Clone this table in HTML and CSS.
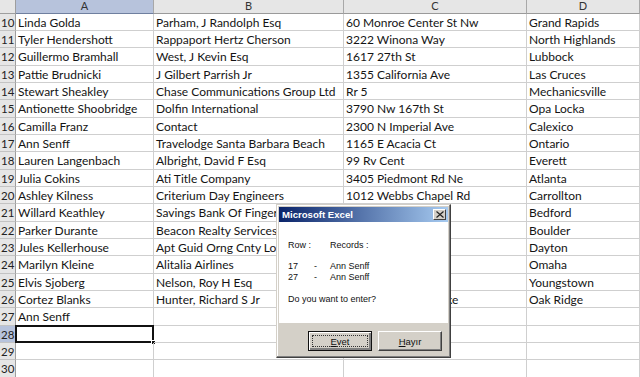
FILE: index.html
```html
<!DOCTYPE html>
<html>
<head>
<meta charset="utf-8">
<link rel="stylesheet" href="styles.css">
</head>
<body>
<div class="sheet">
  <div class="corner"></div>
  <div class="colhead sel">A</div>
  <div class="colhead">B</div>
  <div class="colhead">C</div>
  <div class="colhead">D</div>

  <div class="rowhead">10</div><div class="cell">Linda Golda</div><div class="cell">Parham, J Randolph Esq</div><div class="cell">60 Monroe Center St Nw</div><div class="cell">Grand Rapids</div>
  <div class="rowhead">11</div><div class="cell">Tyler Hendershott</div><div class="cell">Rappaport Hertz Cherson</div><div class="cell">3222 Winona Way</div><div class="cell">North Highlands</div>
  <div class="rowhead">12</div><div class="cell">Guillermo Bramhall</div><div class="cell">West, J Kevin Esq</div><div class="cell">1617 27th St</div><div class="cell">Lubbock</div>
  <div class="rowhead">13</div><div class="cell">Pattie Brudnicki</div><div class="cell">J Gilbert Parrish Jr</div><div class="cell">1355 California Ave</div><div class="cell">Las Cruces</div>
  <div class="rowhead">14</div><div class="cell">Stewart Sheakley</div><div class="cell">Chase Communications Group Ltd</div><div class="cell">Rr 5</div><div class="cell">Mechanicsville</div>
  <div class="rowhead">15</div><div class="cell">Antionette Shoobridge</div><div class="cell">Dolfin International</div><div class="cell">3790 Nw 167th St</div><div class="cell">Opa Locka</div>
  <div class="rowhead">16</div><div class="cell">Camilla Franz</div><div class="cell">Contact</div><div class="cell">2300 N Imperial Ave</div><div class="cell">Calexico</div>
  <div class="rowhead">17</div><div class="cell">Ann Senff</div><div class="cell">Travelodge Santa Barbara Beach</div><div class="cell">1165 E Acacia Ct</div><div class="cell">Ontario</div>
  <div class="rowhead">18</div><div class="cell">Lauren Langenbach</div><div class="cell">Albright, David F Esq</div><div class="cell">99 Rv Cent</div><div class="cell">Everett</div>
  <div class="rowhead">19</div><div class="cell">Julia Cokins</div><div class="cell">Ati Title Company</div><div class="cell">3405 Piedmont Rd Ne</div><div class="cell">Atlanta</div>
  <div class="rowhead">20</div><div class="cell">Ashley Kilness</div><div class="cell">Criterium Day Engineers</div><div class="cell">1012 Webbs Chapel Rd</div><div class="cell">Carrollton</div>
  <div class="rowhead">21</div><div class="cell">Willard Keathley</div><div class="cell">Savings Bank Of Finger Lakes</div><div class="cell">41 Main St</div><div class="cell">Bedford</div>
  <div class="rowhead">22</div><div class="cell">Parker Durante</div><div class="cell">Beacon Realty Services</div><div class="cell">2575 Pearl St Ste</div><div class="cell">Boulder</div>
  <div class="rowhead">23</div><div class="cell">Jules Kellerhouse</div><div class="cell">Apt Guid Orng Cnty Lodging</div><div class="cell">6 Commerce Place</div><div class="cell">Dayton</div>
  <div class="rowhead">24</div><div class="cell">Marilyn Kleine</div><div class="cell">Alitalia Airlines</div><div class="cell">4012 Farnam St</div><div class="cell">Omaha</div>
  <div class="rowhead">25</div><div class="cell">Elvis Sjoberg</div><div class="cell">Nelson, Roy H Esq</div><div class="cell">34 W Federal St</div><div class="cell">Youngstown</div>
  <div class="rowhead">26</div><div class="cell">Cortez Blanks</div><div class="cell">Hunter, Richard S Jr</div><div class="cell">1020 Oak Ridge Tpke</div><div class="cell">Oak Ridge</div>
  <div class="rowhead">27</div><div class="cell">Ann Senff</div><div class="cell"></div><div class="cell"></div><div class="cell"></div>
  <div class="rowhead sel">28</div><div class="cell active"><span class="handle"></span></div><div class="cell"></div><div class="cell"></div><div class="cell"></div>
  <div class="rowhead">29</div><div class="cell"></div><div class="cell"></div><div class="cell"></div><div class="cell"></div>
  <div class="rowhead">30</div><div class="cell"></div><div class="cell"></div><div class="cell"></div><div class="cell"></div>
</div>

<div class="dialog">
  <div class="titlebar">
    <span class="title">Microsoft Excel</span>
    <span class="close"><svg width="8" height="7" viewBox="0 0 8 7"><path d="M0.5 0.5 L7.5 6.5 M7.5 0.5 L0.5 6.5" stroke="#222" stroke-width="1.2" fill="none"/></svg></span>
  </div>
  <div class="dbody">
    <div class="line"><span class="h1">Row :</span><span>Records :</span></div>
    <div class="line gap"><span class="c1">17</span><span class="c2">-</span><span>Ann Senff</span></div>
    <div class="line"><span class="c1">27</span><span class="c2">-</span><span>Ann Senff</span></div>
    <div class="line q">Do you want to enter?</div>
  </div>
  <div class="dfoot">
    <button class="btn default"><span class="focus"><u>E</u>vet</span></button>
    <button class="btn"><u>H</u>ayır</button>
  </div>
</div>
</body>
</html>
```

FILE: styles.css
```css
html, body {
  margin: 0;
  padding: 0;
  background: #ffffff;
  overflow: hidden;
}
.sheet {
  display: grid;
  grid-template-columns: 16px 138px 190px 183px 113px;
  grid-template-rows: 13.67px repeat(21, 17.33px);
  width: 640px;
  font-family: "Lato", "Liberation Sans", sans-serif;
  font-size: 12px;
  color: #141414;
}
.corner {
  background: #e6e6e6;
  border-right: 1px solid #9e9e9e;
  border-bottom: 1px solid #9e9e9e;
  box-sizing: border-box;
}
.colhead {
  background: #e6e6e6;
  border-right: 1px solid #a8a8a8;
  border-bottom: 1px solid #9a9a9a;
  box-sizing: border-box;
  text-align: center;
  font-size: 11px;
  line-height: 12px;
  color: #333;
}
.colhead.sel {
  background: #b7c3dc;
  border-bottom-color: #6f7f9f;
}
.rowhead {
  background: #e6e6e6;
  border-right: 1px solid #9e9e9e;
  border-bottom: 1px solid #c3c3c3;
  box-sizing: border-box;
  font-size: 11.5px;
  line-height: 17px;
  padding-left: 1px;
  color: #222;
  overflow: hidden;
}
.rowhead.sel {
  background: #b7c3dc;
}
.cell {
  border-right: 1px solid #cfcfcf;
  border-bottom: 1px solid #cfcfcf;
  box-sizing: border-box;
  padding-left: 2px;
  line-height: 17px;
  white-space: nowrap;
  overflow: hidden;
  position: relative;
}
.cell.active {
  border: 2px solid #111;
  margin: -1px 0 0 -1px;
  overflow: visible;
}
.handle {
  position: absolute;
  right: -4px;
  bottom: -4px;
  width: 5px;
  height: 5px;
  background: #111;
  border: 1px solid #fff;
  box-sizing: border-box;
}

.dialog {
  position: absolute;
  left: 276px;
  top: 204px;
  width: 175px;
  height: 154px;
  box-sizing: border-box;
  background: #d4d0c8;
  border: 1px solid #d4d0c8;
  border-right-color: #404040;
  border-bottom-color: #404040;
  box-shadow: inset -1px -1px 0 #808080, inset 1px 1px 0 #ffffff;
  padding: 2px;
  display: flex;
  flex-direction: column;
  font-family: "Liberation Sans", "DejaVu Sans", sans-serif;
  font-size: 9px;
  color: #111;
}
.titlebar {
  height: 15px;
  flex: none;
  background: linear-gradient(to right, #0a246a, #a6caf0);
  display: flex;
  align-items: center;
  justify-content: space-between;
  padding: 0 2px 0 3px;
}
.title {
  color: #fff;
  font-weight: bold;
  font-size: 9.6px;
  font-family: "Liberation Sans", sans-serif;
}
.close {
  width: 13px;
  height: 11px;
  background: #d4d0c8;
  box-sizing: border-box;
  border: 1px solid #fff;
  border-right-color: #404040;
  border-bottom-color: #404040;
  display: flex;
  align-items: center;
  justify-content: center;
}
.dbody {
  height: 101px;
  flex: none;
  padding: 18px 0 0 9px;
  box-sizing: border-box;
  background: #fff;
}
.line {
  display: flex;
  height: 11px;
  line-height: 11px;
}
.line.gap { margin-top: 10px; }
.line.q { margin-top: 11px; }
.h1 { width: 42px; }
.c1 { width: 26px; }
.c2 { width: 16px; }
.dfoot {
  flex: 1;
  background: #d4d0c8;
  display: flex;
  gap: 6px;
  padding: 8px 0 0 29px;
  box-sizing: border-box;
}
.btn {
  width: 64px;
  height: 20px;
  box-sizing: border-box;
  background: #d4d0c8;
  border: 1px solid #fff;
  border-right-color: #404040;
  border-bottom-color: #404040;
  box-shadow: inset -1px -1px 0 #808080;
  font-family: "Liberation Sans", "DejaVu Sans", sans-serif;
  font-size: 9.5px;
  color: #111;
  padding: 0;
  display: flex;
  align-items: center;
  justify-content: center;
}
.btn.default {
  border: 1px solid #111;
  box-shadow: inset 1px 1px 0 #fff, inset -2px -2px 0 #808080;
}
.focus {
  display: flex;
  align-items: center;
  justify-content: center;
  width: 56px;
  height: 12px;
  border: 1px dotted #333;
  box-sizing: border-box;
}
```
